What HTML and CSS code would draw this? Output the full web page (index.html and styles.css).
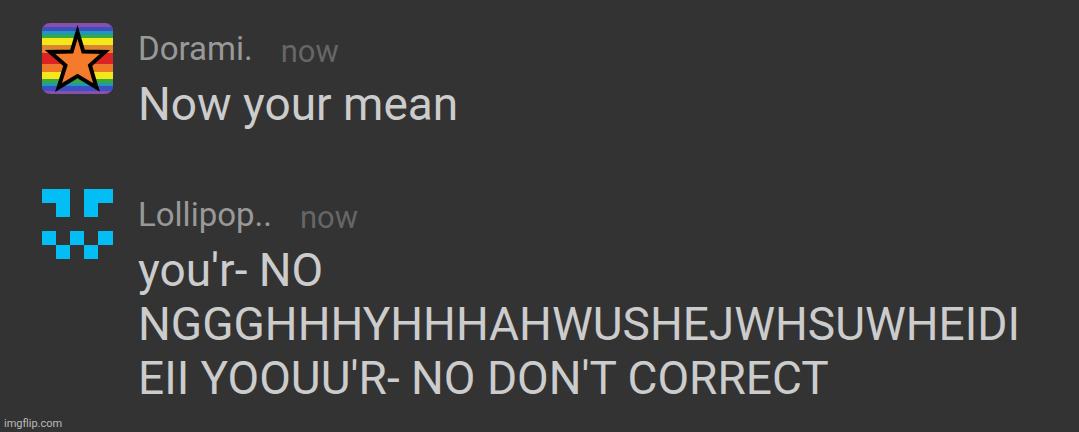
FILE: index.html
```html
<!DOCTYPE html>
<html lang="en">
<head>
<meta charset="utf-8">
<title>Comments</title>
<link rel="stylesheet" href="styles.css">
</head>
<body>
<main class="thread">
  <article class="comment">
    <svg class="avatar" viewBox="0 0 71 71" aria-hidden="true">
      <clipPath id="round"><rect width="71" height="71" rx="8"/></clipPath>
      <g clip-path="url(#round)">
        <rect width="71" height="71" fill="#8a50a8"/>
        <rect y="4" width="71" height="64" fill="#3c50c4"/>
        <rect y="8" width="71" height="55" fill="#1e98b4"/>
        <rect y="12" width="71" height="48" fill="#3ba83e"/>
        <rect y="15" width="71" height="41" fill="#f5e81a"/>
        <rect y="22" width="71" height="8" fill="#dc8630"/>
        <rect y="30" width="71" height="19" fill="#f0782a"/>
        <rect y="30" width="71" height="11" fill="#dc2222"/>
      </g>
      <path d="M35.500 9L41.300 28.500L63 29L48 42.300L54.500 64.500L35.500 53L16.500 64.500L23.500 42.300L8 29L29.700 28.500Z" fill="#f47b2c" stroke="#000" stroke-width="4" stroke-miterlimit="8"/>
    </svg>
    <div class="body">
      <header class="meta"><span class="name">Dorami.</span><span class="time">now</span></header>
      <p class="text">Now your mean</p>
    </div>
  </article>
  <article class="comment">
    <svg class="avatar" viewBox="0 0 71 71" shape-rendering="crispEdges" aria-hidden="true">
      <path d="M0 0H28V28H14V14H0ZM42 0H71V14H56V28H42ZM0 42H14V56H0ZM28 42H42V56H28ZM56 42H71V56H56ZM14 56H28V70H14ZM42 56H56V70H42Z" fill="#03bdf5"/>
    </svg>
    <div class="body">
      <header class="meta"><span class="name">Lollipop..</span><span class="time">now</span></header>
      <p class="text">you'r- NO NGGGHHHYHHHAHWUSHEJWHSUWHEIDIEII YOOUU'R- NO DON'T CORRECT</p>
    </div>
  </article>
</main>
<footer class="credit">imgflip.com</footer>
</body>
</html>
```
FILE: styles.css
```css
* { box-sizing: border-box; }
body {
  margin: 0;
  min-height: 100vh;
  display: flex;
  flex-direction: column;
  background: #333;
  font-family: Roboto, sans-serif;
}
.thread {
  flex: 1;
  display: flex;
  flex-direction: column;
  gap: 58px;
  padding: 23px 42px 0;
}
.comment { display: flex; gap: 25px; }
.avatar { flex: none; width: 71px; height: 71px; }
.body { flex: 1; min-width: 0; }
.meta {
  display: flex;
  align-items: flex-start;
  gap: 28px;
  height: 54px;
}
.name {
  color: #999;
  font-size: 33px;
  line-height: 52px;
}
.time {
  color: #666;
  font-size: 31px;
  line-height: 58px;
}
.text {
  margin: 0;
  color: #ccc;
  font-size: 46px;
  line-height: 54px;
  overflow-wrap: anywhere;
}
.credit {
  padding: 0 4px 1px;
  color: #bbb;
  font-size: 11px;
  line-height: 14px;
}
```
